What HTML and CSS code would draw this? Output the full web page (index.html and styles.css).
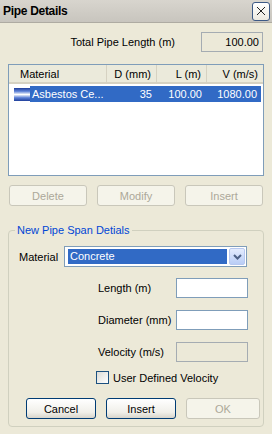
FILE: index.html
```html
<!DOCTYPE html>
<html>
<head>
<meta charset="utf-8">
<link rel="stylesheet" href="styles.css">
</head>
<body>
<div class="dialog">
  <div class="titlebar">
    <span class="title">Pipe Details</span>
    <span class="close">
      <svg width="10" height="10" viewBox="0 0 10 10"><path d="M1 1 L9 9 M9 1 L1 9" stroke="#222" stroke-width="1" fill="none"/></svg>
    </span>
  </div>

  <div class="total-row">
    <span class="total-label">Total Pipe Length (m)</span>
    <span class="edit disabled total-box">100.00</span>
  </div>

  <div class="listview">
    <div class="lv-header">
      <span class="col c-mat">Material</span>
      <span class="col c-d">D (mm)</span>
      <span class="col c-l">L (m)</span>
      <span class="col c-v">V (m/s)</span>
    </div>
    <div class="lv-row">
      <span class="row-icon"></span>
      <div class="row-sel">
        <span class="cell c-mat2">Asbestos Ce...</span>
        <span class="cell c-d">35</span>
        <span class="cell c-l">100.00</span>
        <span class="cell c-v">1080.00</span>
      </div>
    </div>
  </div>

  <div class="btn-row">
    <span class="btn off">Delete</span>
    <span class="btn off">Modify</span>
    <span class="btn off">Insert</span>
  </div>

  <fieldset class="group">
    <legend>New Pipe Span Detials</legend>
    <div class="mat-row">
      <span class="mat-label">Material</span>
      <div class="combo">
        <span class="combo-sel">Concrete</span>
        <span class="combo-btn">
          <svg width="9" height="6" viewBox="0 0 9 6"><path d="M1 1 L4.5 4.5 L8 1" stroke="#4d6185" stroke-width="2" fill="none"/></svg>
        </span>
      </div>
    </div>
    <div class="field-row first">
      <span class="field-label">Length (m)</span>
      <span class="edit field-box"></span>
    </div>
    <div class="field-row">
      <span class="field-label">Diameter (mm)</span>
      <span class="edit field-box"></span>
    </div>
    <div class="field-row">
      <span class="field-label">Velocity (m/s)</span>
      <span class="edit disabled field-box"></span>
    </div>
    <div class="check-row">
      <span class="checkbox"></span>
      <span>User Defined Velocity</span>
    </div>
    <div class="btn-row bottom">
      <span class="btn">Cancel</span>
      <span class="btn">Insert</span>
      <span class="btn off">OK</span>
    </div>
  </fieldset>
</div>
</body>
</html>
```

FILE: styles.css
```css
* { box-sizing: border-box; }
html, body { margin: 0; padding: 0; }
body {
  width: 272px;
  height: 434px;
  overflow: hidden;
  background: #ece9d8;
  font-family: "Liberation Sans", Arial, sans-serif;
  font-size: 11px;
  color: #000;
}
.dialog { width: 272px; height: 434px; }

.titlebar {
  height: 23px;
  display: flex;
  align-items: center;
  justify-content: space-between;
  padding: 0 2px 0 3px;
  background: linear-gradient(#d8d5ce, #c8c5be);
  border-bottom: 1px solid #aeaba2;
}
.title { font-weight: bold; font-size: 12px; letter-spacing: -0.3px; }
.close {
  width: 18px;
  height: 19px;
  border: 1px solid #3d5a86;
  border-radius: 3px;
  background: linear-gradient(#ffffff, #ece9e0);
  display: flex;
  align-items: center;
  justify-content: center;
}

.total-row {
  display: flex;
  justify-content: flex-end;
  align-items: center;
  margin-top: 9px;
  padding-right: 9px;
}
.total-label { margin-right: 26px; }
.edit {
  display: block;
  border: 1px solid #7f9db9;
  background: #fff;
  height: 20px;
}
.edit.disabled { background: #ece9d8; border-color: #a5acb2; }
.total-box {
  width: 62px;
  text-align: right;
  padding: 3px 3px 0 0;
}

.listview {
  margin: 12px 8px 0 8px;
  height: 112px;
  border: 1px solid #7f9db9;
  background: #fff;
}
.lv-header {
  display: flex;
  height: 19px;
  background: #ebeadb;
  border-bottom: 2px solid #d6d2c2;
}
.col {
  display: flex;
  align-items: center;
  border-right: 1px solid #d6d2c2;
  padding-right: 5px;
  justify-content: flex-end;
  white-space: nowrap;
}
.col.c-mat { width: 98px; justify-content: flex-start; padding-left: 11px; }
.col.c-d { width: 50px; }
.col.c-l { width: 50px; }
.col.c-v { width: 55px; border-right: none; padding-right: 4px; }

.lv-row {
  display: flex;
  align-items: center;
  height: 16px;
  margin-top: 2px;
  padding-left: 5px;
}
.row-icon {
  width: 16px;
  height: 13px;
  background: linear-gradient(#1f3f9a 0%, #5b7fd6 25%, #ffffff 50%, #5b7fd6 75%, #1f3f9a 100%);
}
.row-sel {
  flex: 1;
  display: flex;
  height: 16px;
  align-items: center;
  background: #316ac5;
  color: #fff;
  margin-right: 2px;
}
.cell { display: block; text-align: right; padding-right: 5px; white-space: nowrap; overflow: hidden; }
.cell.c-mat2 { width: 77px; text-align: left; padding-left: 2px; padding-right: 0; }
.cell.c-d { width: 50px; }
.cell.c-l { width: 50px; }
.cell.c-v { width: 54px; padding-right: 4px; }

.btn-row {
  display: flex;
  gap: 10px;
  margin: 9px 9px 0 9px;
}
.btn {
  width: 78px;
  height: 21px;
  border: 1px solid #003c74;
  border-radius: 3px;
  background: linear-gradient(#ffffff, #f0efe9 70%, #d8d5cb);
  display: flex;
  align-items: center;
  justify-content: center;
}
.btn.off {
  border-color: #c9c7ba;
  background: #f5f4ea;
  color: #aca899;
}

.group {
  margin: 18px 8px 0 8px;
  padding: 0;
  border: 1px solid #d0d0bf;
  border-radius: 4px;
  height: 203px;
}
.group legend {
  color: #0046d5;
  margin-left: 6px;
  padding: 0 2px;
  line-height: 13px;
}
.mat-row {
  display: flex;
  align-items: center;
  margin-top: 9px;
  padding-left: 10px;
}
.mat-label { width: 45px; }
.combo {
  width: 183px;
  height: 21px;
  border: 1px solid #7f9db9;
  background: #fff;
  display: flex;
  align-items: center;
  padding: 1px;
}
.combo-sel {
  flex: 1;
  height: 15px;
  margin: 0 2px;
  background: #316ac5;
  color: #fff;
  padding-left: 2px;
  line-height: 15px;
}
.combo-btn {
  width: 16px;
  height: 17px;
  border: 1px solid #b7c8f0;
  border-radius: 2px;
  background: linear-gradient(#e4ecfd, #b9cdf6);
  display: flex;
  align-items: center;
  justify-content: center;
}
.field-row {
  display: flex;
  align-items: center;
  margin-top: 12px;
  padding-left: 89px;
}
.field-row.first { margin-top: 11px; }
.field-label { width: 78px; }
.field-box { width: 72px; }
.check-row {
  display: flex;
  align-items: center;
  margin-top: 9px;
  padding-left: 87px;
  gap: 4px;
}
.checkbox {
  width: 13px;
  height: 13px;
  border: 1px solid #1c5180;
  background: linear-gradient(135deg, #dcdcd7, #ffffff);
}
.btn-row.bottom {
  margin: 14px 0 0 17px;
}
.btn-row.bottom .btn { width: 70px; }
.btn-row.bottom .btn.off { width: 74px; }
```
